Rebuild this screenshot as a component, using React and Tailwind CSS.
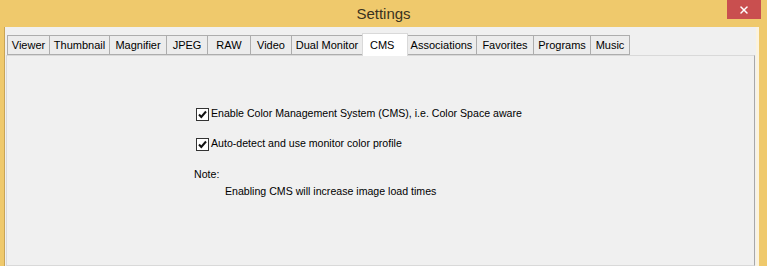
import { X } from "lucide-react";

const tabs = [
  ["Viewer", 43],
  ["Thumbnail", 60],
  ["Magnifier", 57],
  ["JPEG", 41],
  ["RAW", 43],
  ["Video", 41],
  ["Dual Monitor", 71],
  ["CMS", 44],
  ["Associations", 70],
  ["Favorites", 57],
  ["Programs", 57],
  ["Music", 39],
];

function CheckBox() {
  return (
    <span className="w-[13px] h-[13px] border border-[#333333] bg-white flex items-center justify-center shrink-0">
      <svg width="11" height="11" viewBox="0 0 11 11">
        <path d="M2 5.5 L4.3 8 L9 2.5" fill="none" stroke="#111" strokeWidth="2" />
      </svg>
    </span>
  );
}

export default function App() {
  return (
    <div
      className="w-[767px] h-[266px] bg-[#efc96c] flex flex-col overflow-hidden text-black"
      style={{ fontFamily: '"Liberation Sans", Arial, sans-serif' }}
    >
      {/* Title bar */}
      <div className="h-[27px] shrink-0 grid grid-cols-[1fr_auto_1fr] items-start">
        <div />
        <div className="text-[15px] text-[#3a3220] pt-[3px]">Settings</div>
        <div className="flex justify-end pr-[6px]">
          <div className="w-[34px] h-[19px] bg-[#c94f4f] flex items-center justify-center">
            <X className="w-[12px] h-[12px] text-white" strokeWidth={3} />
          </div>
        </div>
      </div>

      {/* Client */}
      <div className="flex-1 ml-[4px] mr-[8px] border-l border-[#c9a455] border-r-[3px] border-r-[#fbf3df] bg-[#f0f0f0] pt-[6px] pl-[1px] flex flex-col">
        <div className="flex items-end h-[23px] pl-[1px] relative z-10">
          {tabs.map(([name, w]) =>
            name === "CMS" ? (
              <div
                key={name}
                className="h-[23px] bg-white border border-[#d9d9d9] border-b-0 -mx-[1px] flex items-start pl-[7px] pt-[3px] text-[11px] relative z-10"
                style={{ width: w + 2 }}
              >
                {name}
              </div>
            ) : (
              <div
                key={name}
                className="h-[20px] bg-[#ececec] border border-[#adadad] border-l-0 first:border-l flex items-center justify-center text-[11px] mb-[1px]"
                style={{ width: w }}
              >
                {name}
              </div>
            )
          )}
        </div>
        <div className="flex-1 -mt-[1px] mr-[1px] border border-[#d9d9d9] border-r-[#a8a8a8] bg-[#f0f0f0] pt-[51px] pl-[189px] text-[10.6px]">
          <div className="flex items-center gap-[2px] h-[14px]">
            <CheckBox />
            <span>Enable Color Management System (CMS), i.e. Color Space aware</span>
          </div>
          <div className="flex items-center gap-[2px] h-[14px] mt-[16px]">
            <CheckBox />
            <span>Auto-detect and use monitor color profile</span>
          </div>
          <div className="mt-[16px] -ml-[2px]">Note:</div>
          <div className="mt-[1px] ml-[29px]">Enabling CMS will increase image load times</div>
        </div>
      </div>
    </div>
  );
}
